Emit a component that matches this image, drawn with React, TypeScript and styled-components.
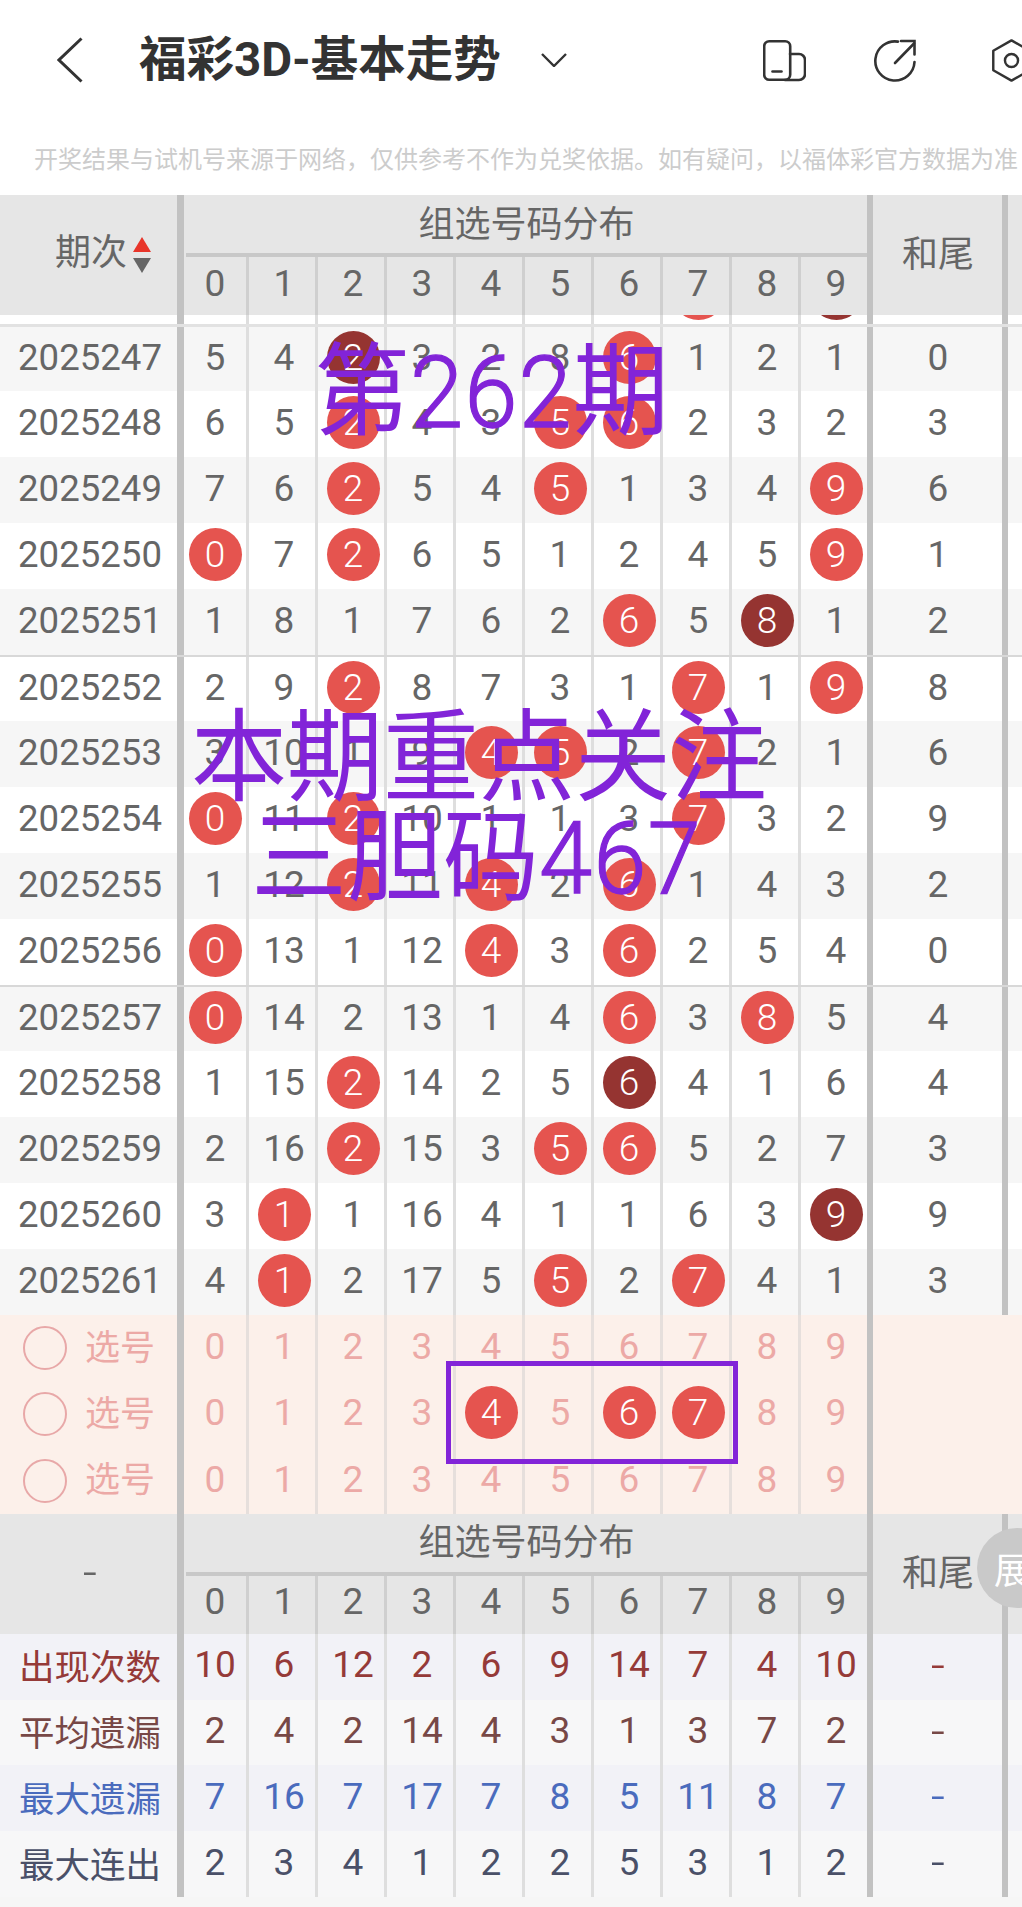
import React from "react";
import styled, { createGlobalStyle } from "styled-components";

const GlobalStyle = createGlobalStyle`
  html, body {
    margin: 0;
    padding: 0;
    background: #f6f6f6;
  }
  * {
    box-sizing: border-box;
  }
`;

const CJK = `Roboto, "Noto Sans CJK SC", sans-serif`;
const GRID = "180px repeat(10, 69px) 132px 1fr";
const PURPLE = "#8224d8";
const THICK = "#c2c2c2";

type BallKind = "red" | "dark";
type NumValue = number | { n: number; ball: BallKind };

const r = (n: number): NumValue => ({ n, ball: "red" });
const d = (n: number): NumValue => ({ n, ball: "dark" });

const ROWS: { id: string; nums: NumValue[]; tail: number; divider?: boolean }[] = [
  { id: "2025247", nums: [5, 4, d(2), 3, 2, 8, r(6), 1, 2, 1], tail: 0 },
  { id: "2025248", nums: [6, 5, r(2), 4, 3, r(5), r(6), 2, 3, 2], tail: 3 },
  { id: "2025249", nums: [7, 6, r(2), 5, 4, r(5), 1, 3, 4, r(9)], tail: 6 },
  { id: "2025250", nums: [r(0), 7, r(2), 6, 5, 1, 2, 4, 5, r(9)], tail: 1 },
  { id: "2025251", nums: [1, 8, 1, 7, 6, 2, r(6), 5, d(8), 1], tail: 2 },
  { id: "2025252", nums: [2, 9, r(2), 8, 7, 3, 1, r(7), 1, r(9)], tail: 8, divider: true },
  { id: "2025253", nums: [3, 10, 1, 9, r(4), r(5), 2, r(7), 2, 1], tail: 6 },
  { id: "2025254", nums: [r(0), 11, r(2), 10, 1, 1, 3, r(7), 3, 2], tail: 9 },
  { id: "2025255", nums: [1, 12, r(2), 11, r(4), 2, r(6), 1, 4, 3], tail: 2 },
  { id: "2025256", nums: [r(0), 13, 1, 12, r(4), 3, r(6), 2, 5, 4], tail: 0 },
  { id: "2025257", nums: [r(0), 14, 2, 13, 1, 4, r(6), 3, r(8), 5], tail: 4, divider: true },
  { id: "2025258", nums: [1, 15, r(2), 14, 2, 5, d(6), 4, 1, 6], tail: 4 },
  { id: "2025259", nums: [2, 16, r(2), 15, 3, r(5), r(6), 5, 2, 7], tail: 3 },
  { id: "2025260", nums: [3, r(1), 1, 16, 4, 1, 1, 6, 3, d(9)], tail: 9 },
  { id: "2025261", nums: [4, r(1), 2, 17, 5, r(5), 2, r(7), 4, 1], tail: 3 },
];

const PARTIAL_ROW: NumValue[] = [4, 3, 1, 2, 1, 7, 5, r(7), 1, d(9)];
const PICKED = [4, 6, 7];

const STATS = [
  { label: "出现次数", color: "#953a38", bg: "#f2f2f7", nums: [10, 6, 12, 2, 6, 9, 14, 7, 4, 10] },
  { label: "平均遗漏", color: "#774846", bg: "#f7f7f8", nums: [2, 4, 2, 14, 4, 3, 1, 3, 7, 2] },
  { label: "最大遗漏", color: "#4a6bbd", bg: "#f2f2f7", nums: [7, 16, 7, 17, 7, 8, 5, 11, 8, 7] },
  { label: "最大连出", color: "#4a5068", bg: "#f7f7f8", nums: [2, 3, 4, 1, 2, 2, 5, 3, 1, 2] },
];

const DIGITS = [0, 1, 2, 3, 4, 5, 6, 7, 8, 9];

const App = () => {
  const renderNums = (nums: NumValue[]) =>
    nums.map((value, i) => (
      <NumCell key={i} $last={i === 9}>
        {typeof value === "number" ? value : <Ball $kind={value.ball}>{value.n}</Ball>}
      </NumCell>
    ));

  return (
    <Page>
      <GlobalStyle />
      <NavBar>
        <BackIcon viewBox="0 0 26 46">
          <path d="M24.5 1.5 2 23l22.5 21.5" />
        </BackIcon>
        <Title>福彩3D-基本走势</Title>
        <CaretIcon viewBox="0 0 26 14">
          <path d="M1 1l12 12L25 1" />
        </CaretIcon>
        <NavIcon viewBox="0 0 43 41" $left={196}>
          <rect x="1.2" y="1.2" width="26" height="38.6" rx="5" />
          <path d="M27 14h9a6 6 0 0 1 6 6v14a6 6 0 0 1-6 6H22" />
          <path d="M9.5 31.5h9" />
        </NavIcon>
        <NavIcon viewBox="0 0 43 43" $left={67}>
          <path d="M25 2.6A19.6 19.6 0 1 0 41.5 23" />
          <path d="M22 24 41 4.5" />
          <path d="M28 2h13.5v13.5" />
        </NavIcon>
        <NavIcon viewBox="0 0 42 46" $left={74}>
          <path d="M21 1.5 40.5 12.5v21L21 44.5 1.5 33.5v-21z" strokeLinejoin="round" />
          <circle cx="21" cy="23" r="7" />
        </NavIcon>
      </NavBar>
      <Notice>开奖结果与试机号来源于网络，仅供参考不作为兑奖依据。如有疑问，以福体彩官方数据为准</Notice>

      <BandHeader>
        <HeadLead>
          <HeadLabel>期次</HeadLabel>
          <SortArrows>
            <ArrowUp />
            <ArrowDown />
          </SortArrows>
        </HeadLead>
        <BandTitle>组选号码分布</BandTitle>
        {DIGITS.map((n) => (
          <HeadDigit key={n} $last={n === 9}>
            {n}
          </HeadDigit>
        ))}
        <HeadTail>和尾</HeadTail>
        <HeadEdge />
      </BandHeader>

      <PartialWrap>
        <DataRow>
          <LeadCell>2025246</LeadCell>
          {renderNums(PARTIAL_ROW)}
          <TailCell>8</TailCell>
          <EdgeCell />
        </DataRow>
      </PartialWrap>

      {ROWS.map((row, i) => (
        <DataRow key={row.id} $shaded={i % 2 === 0} $divider={row.divider} $first={i === 0}>
          <LeadCell>{row.id}</LeadCell>
          {renderNums(row.nums)}
          <TailCell>{row.tail}</TailCell>
          <EdgeCell />
        </DataRow>
      ))}

      <PickArea>
        {[0, 1, 2].map((line) => (
          <PickRow key={line}>
            <PickLead>
              <PickCircle />
              <PickLabel>选号</PickLabel>
            </PickLead>
            {DIGITS.map((n) => (
              <PickCell key={n} $last={n === 9}>
                {line === 1 && PICKED.includes(n) ? <Ball $kind="red">{n}</Ball> : n}
              </PickCell>
            ))}
            <PickTail />
            <div />
          </PickRow>
        ))}
        <PickFrame />
      </PickArea>

      <BandHeader>
        <HeadLead $center>
          <DashMark>-</DashMark>
        </HeadLead>
        <BandTitle>组选号码分布</BandTitle>
        {DIGITS.map((n) => (
          <HeadDigit key={n} $last={n === 9}>
            {n}
          </HeadDigit>
        ))}
        <HeadTail>和尾</HeadTail>
        <HeadEdge />
        <ExpandBadge>展</ExpandBadge>
      </BandHeader>

      {STATS.map((stat) => (
        <StatRow key={stat.label} $bg={stat.bg} $color={stat.color}>
          <StatLabel>{stat.label}</StatLabel>
          {stat.nums.map((n, i) => (
            <NumCell key={i} $last={i === 9}>
              {n}
            </NumCell>
          ))}
          <TailCell>
            <DashMark>-</DashMark>
          </TailCell>
          <EdgeCell />
        </StatRow>
      ))}

      <OverlayText $left={314} $top={334}>
        第<OverlayDigits>262</OverlayDigits>期
      </OverlayText>
      <OverlayText $left={191} $top={700}>
        本期重点关注
      </OverlayText>
      <OverlayText $left={251} $top={800}>
        三胆码<OverlayDigits>467</OverlayDigits>
      </OverlayText>
    </Page>
  );
};

const Page = styled.div`
  position: relative;
  width: 1022px;
  height: 1907px;
  overflow: hidden;
  background: #f6f6f6;
  font-family: ${CJK};
  color: #666;
`;

const NavBar = styled.div`
  height: 120px;
  padding: 0 0 0 57px;
  display: flex;
  align-items: center;
  background: #fff;
  overflow: hidden;
`;

const BackIcon = styled.svg`
  width: 26px;
  height: 46px;
  flex: none;
  fill: none;
  stroke: #333;
  stroke-width: 3;
`;

const Title = styled.div`
  margin-left: 56px;
  width: 360px;
  flex: none;
  font-size: 47.5px;
  line-height: 50px;
  font-weight: 700;
  color: #333;
  white-space: nowrap;
`;

const CaretIcon = styled.svg`
  margin-left: 42px;
  width: 26px;
  height: 14px;
  flex: none;
  fill: none;
  stroke: #333;
  stroke-width: 2.4;
`;

const NavIcon = styled.svg<{ $left: number }>`
  margin-left: ${(p) => p.$left}px;
  width: 43px;
  height: 43px;
  flex: none;
  fill: none;
  stroke: #333;
  stroke-width: 2.6;
  stroke-linecap: round;
`;

const Notice = styled.div`
  height: 75px;
  padding: 0 0 0 34px;
  display: flex;
  align-items: center;
  background: #fff;
  font-size: 24px;
  color: #ccc;
  white-space: nowrap;
  overflow: hidden;
`;

const BandHeader = styled.div`
  position: relative;
  display: grid;
  grid-template-columns: ${GRID};
  grid-template-rows: 62px 58px;
  background: #e6e6e6;
  font-size: 36px;
  color: #666;
`;

const HeadLead = styled.div<{ $center?: boolean }>`
  position: relative;
  grid-row: 1 / 3;
  grid-column: 1;
  display: flex;
  align-items: center;
  justify-content: ${(p) => (p.$center ? "center" : "flex-start")};
  padding: ${(p) => (p.$center ? "0 0 4px 0" : "0 0 4px 55px")};
  &::after {
    content: "";
    position: absolute;
    top: 0;
    bottom: 0;
    right: -4px;
    width: 7px;
    background: ${THICK};
  }
`;

const HeadLabel = styled.span`
  line-height: 40px;
`;

const DashMark = styled.span`
  font-size: 50px;
  line-height: 50px;
  font-weight: 300;
`;

const SortArrows = styled.span`
  margin: 3px 0 0 6px;
  display: flex;
  flex-direction: column;
  gap: 6px;
`;

const ArrowUp = styled.i`
  display: block;
  width: 0;
  height: 0;
  border-left: 9px solid transparent;
  border-right: 9px solid transparent;
  border-bottom: 15px solid #e8352a;
`;

const ArrowDown = styled.i`
  display: block;
  width: 0;
  height: 0;
  border-left: 9px solid transparent;
  border-right: 9px solid transparent;
  border-top: 15px solid #666;
`;

const BandTitle = styled.div`
  grid-column: 2 / 12;
  grid-row: 1;
  margin: 0 3px 0 6px;
  padding-bottom: 7px;
  display: flex;
  align-items: center;
  justify-content: center;
  border-bottom: 4px solid #c8c8c8;
`;

const HeadDigit = styled.div<{ $last?: boolean }>`
  grid-row: 2;
  display: flex;
  align-items: center;
  justify-content: center;
  padding: 0 0 6px 4px;
  font-size: 37px;
  border-right: 3px solid ${(p) => (p.$last ? "transparent" : "#cfcfcf")};
`;

const HeadTail = styled.div`
  position: relative;
  grid-column: 12;
  grid-row: 1 / 3;
  display: flex;
  align-items: center;
  justify-content: center;
  padding: 0 0 8px 4px;
  &::before {
    content: "";
    position: absolute;
    top: 0;
    bottom: 0;
    left: -3px;
    width: 6px;
    background: ${THICK};
  }
`;

const HeadEdge = styled.div`
  grid-column: 13;
  grid-row: 1 / 3;
  border-left: 6px solid ${THICK};
`;

const ExpandBadge = styled.div`
  position: absolute;
  left: 977px;
  top: 14px;
  width: 80px;
  height: 80px;
  padding-left: 17px;
  border-radius: 50%;
  background: #c9c9c9;
  color: #fff;
  display: flex;
  align-items: center;
  font-size: 36px;
`;

const PartialWrap = styled.div`
  height: 9px;
  overflow: hidden;
  display: flex;
  flex-direction: column;
  justify-content: flex-end;
  background: #fff;
  & > div {
    margin-bottom: -4px;
  }
`;

const DataRow = styled.div<{ $shaded?: boolean; $divider?: boolean; $first?: boolean }>`
  flex: none;
  display: grid;
  grid-template-columns: ${GRID};
  height: ${(p) => (p.$first ? 67 : 66)}px;
  background: ${(p) => (p.$shaded ? "#f6f6f6" : "#fff")};
  border-top: ${(p) => (p.$first ? "3px solid #e2e2e2" : p.$divider ? "2px solid #d8d8d8" : "none")};
  font-size: 37px;
  color: #666;
`;

const LeadCell = styled.div`
  position: relative;
  display: flex;
  align-items: center;
  justify-content: center;
  padding-bottom: 4px;
  font-size: 36.6px;
  &::after {
    content: "";
    position: absolute;
    top: 0;
    bottom: 0;
    right: -4px;
    width: 7px;
    background: ${THICK};
  }
`;

const NumCell = styled.div<{ $last?: boolean }>`
  display: flex;
  align-items: center;
  justify-content: center;
  padding: 0 0 4px 4px;
  border-right: 3px solid ${(p) => (p.$last ? "transparent" : "#dedede")};
`;

const TailCell = styled.div`
  position: relative;
  display: flex;
  align-items: center;
  justify-content: center;
  padding: 0 0 4px 4px;
  &::before {
    content: "";
    position: absolute;
    top: 0;
    bottom: 0;
    left: -3px;
    width: 6px;
    background: ${THICK};
  }
`;

const EdgeCell = styled.div`
  border-left: 6px solid ${THICK};
`;

const Ball = styled.span<{ $kind: BallKind }>`
  width: 53px;
  height: 53px;
  flex: none;
  border-radius: 50%;
  display: flex;
  align-items: center;
  justify-content: center;
  background: ${(p) => (p.$kind === "dark" ? "#953431" : "#e5544f")};
  color: #fff;
  font-weight: 300;
`;

const PickArea = styled.div`
  position: relative;
`;

const PickRow = styled.div`
  display: grid;
  grid-template-columns: ${GRID};
  height: 66.33px;
  background: #fcf0ea;
  font-size: 37px;
  color: #eca9a6;
`;

const PickLead = styled.div`
  position: relative;
  display: flex;
  align-items: center;
  padding-left: 23px;
  gap: 18px;
  &::after {
    content: "";
    position: absolute;
    top: 0;
    bottom: 0;
    right: -4px;
    width: 7px;
    background: ${THICK};
  }
`;

const PickLabel = styled.span`
  font-size: 35px;
  margin-bottom: 8px;
`;

const PickCircle = styled.span`
  width: 44px;
  height: 44px;
  border: 2.5px solid #e8a8a8;
  border-radius: 50%;
  flex: none;
`;

const PickCell = styled.div<{ $last?: boolean }>`
  display: flex;
  align-items: center;
  justify-content: center;
  padding: 0 0 3px 4px;
  border-right: 3px solid ${(p) => (p.$last ? "transparent" : "#e6dfdc")};
`;

const PickTail = styled.div`
  position: relative;
  &::before {
    content: "";
    position: absolute;
    top: 0;
    bottom: 0;
    left: -3px;
    width: 6px;
    background: ${THICK};
  }
`;

const PickFrame = styled.div`
  position: absolute;
  left: 446px;
  top: 46px;
  width: 292px;
  height: 103px;
  border: 5px solid ${PURPLE};
`;

const StatRow = styled.div<{ $bg: string; $color: string }>`
  display: grid;
  grid-template-columns: ${GRID};
  height: 65.75px;
  background: ${(p) => p.$bg};
  color: ${(p) => p.$color};
  font-size: 37px;
`;

const StatLabel = styled(LeadCell)`
  font-size: 35.5px;
`;

const OverlayText = styled.div<{ $left: number; $top: number }>`
  position: absolute;
  left: ${(p) => p.$left}px;
  top: ${(p) => p.$top}px;
  font-size: 96px;
  line-height: 112px;
  white-space: nowrap;
  color: ${PURPLE};
  transform: scaleY(1.05);
  transform-origin: top left;
`;

const OverlayDigits = styled.span`
  letter-spacing: 1px;
  font-weight: 300;
  -webkit-text-stroke: 1.2px ${PURPLE};
`;

export default App;
